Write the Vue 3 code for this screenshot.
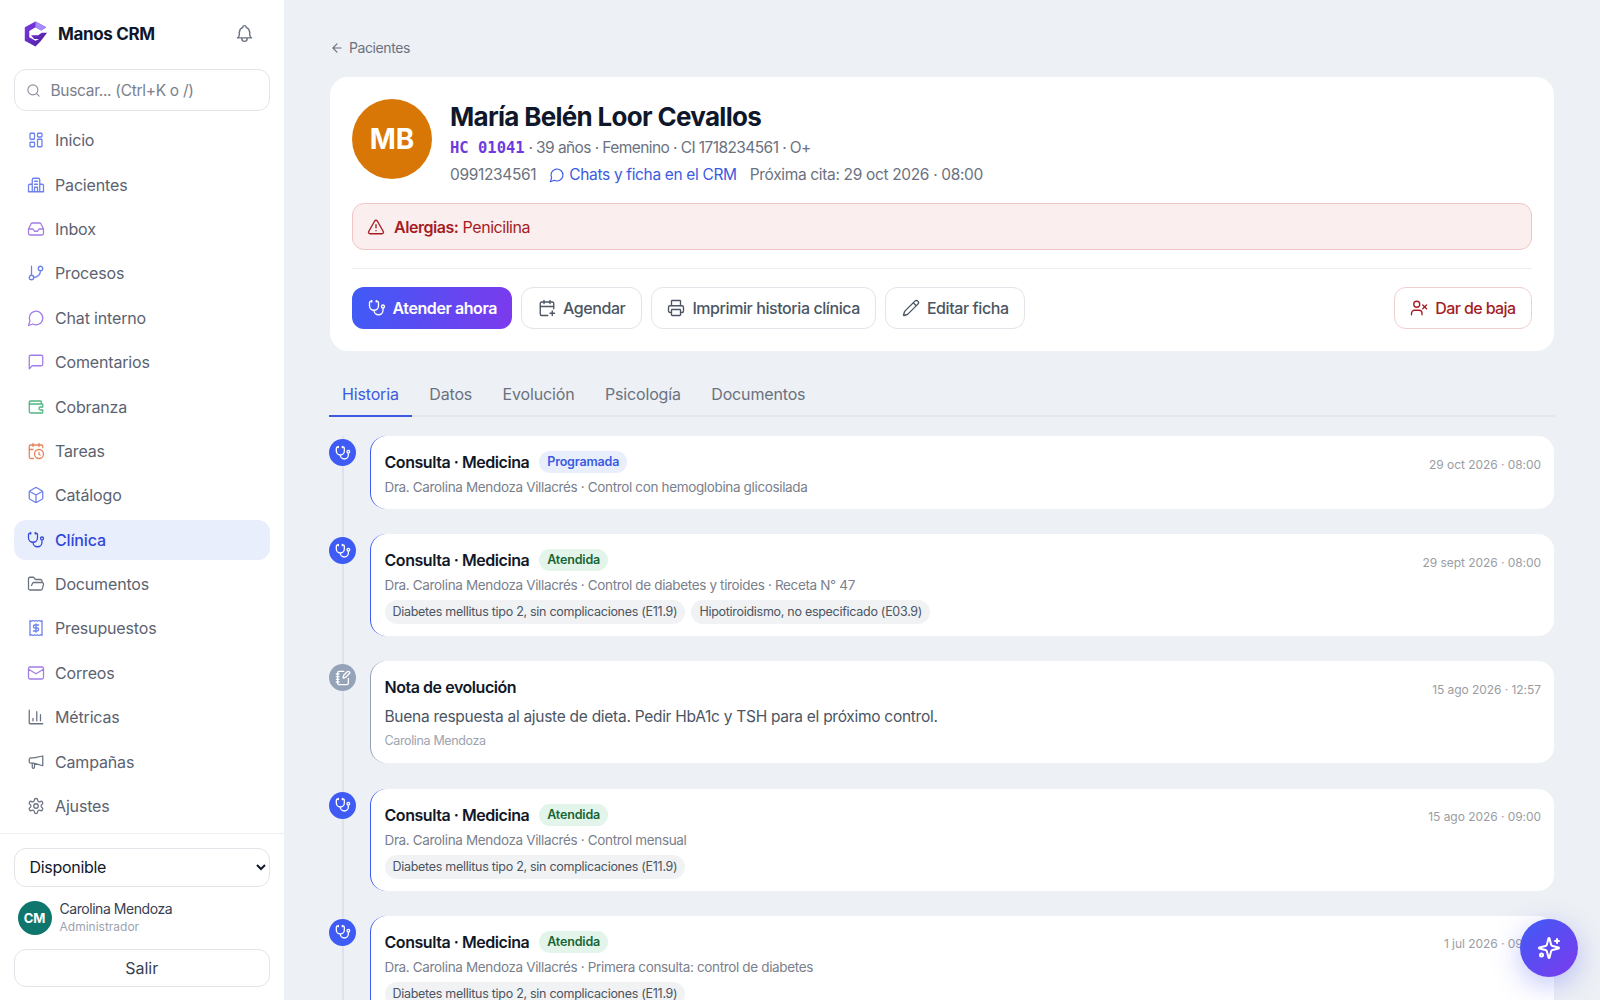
<script setup>
const icons = {
  search: "M3 11a8 8 0 1 0 16 0a8 8 0 1 0-16 0M21 21l-4.3-4.3",
  bell: "M10 5a2 2 0 1 1 4 0a7 7 0 0 1 4 6v3a4 4 0 0 0 2 3h-16a4 4 0 0 0 2-3v-3a7 7 0 0 1 4-6M9 17v1a3 3 0 0 0 6 0v-1",
  home: "M5 3h4a1 1 0 0 1 1 1v6a1 1 0 0 1-1 1h-4a1 1 0 0 1-1-1v-6a1 1 0 0 1 1-1M5 15h4a1 1 0 0 1 1 1v4a1 1 0 0 1-1 1h-4a1 1 0 0 1-1-1v-4a1 1 0 0 1 1-1M15 11h4a1 1 0 0 1 1 1v8a1 1 0 0 1-1 1h-4a1 1 0 0 1-1-1v-8a1 1 0 0 1 1-1M15 3h4a1 1 0 0 1 1 1v3a1 1 0 0 1-1 1h-4a1 1 0 0 1-1-1v-3a1 1 0 0 1 1-1",
  building: "M7 21v-10h-3a2 2 0 0 0-2 2v8M7 21V5a2 2 0 0 1 2-2h6a2 2 0 0 1 2 2v16M17 11h3a2 2 0 0 1 2 2v8M2 21h20M10 7h4M10 11h4M10 21v-6h4v6",
  inbox: "M22 12h-6l-2 3h-4l-2-3H2M5.45 5.11 2 12v6a2 2 0 0 0 2 2h16a2 2 0 0 0 2-2v-6l-3.45-6.89A2 2 0 0 0 16.76 4H7.24a2 2 0 0 0-1.79 1.11z",
  branch: "M6 3v12M3 18a3 3 0 1 0 6 0a3 3 0 1 0-6 0M15 6a3 3 0 1 0 6 0a3 3 0 1 0-6 0M18 9a9 9 0 0 1-9 9",
  chat: "M7.9 20A9 9 0 1 0 4 16.1L2 22Z",
  comment: "M21 15a2 2 0 0 1-2 2H7l-4 4V5a2 2 0 0 1 2-2h14a2 2 0 0 1 2 2z",
  wallet: "M19 7V5a1 1 0 0 0-1-1H5a2 2 0 0 0 0 4h15a1 1 0 0 1 1 1v3h-3a2 2 0 0 0 0 4h3v3a1 1 0 0 1-1 1H5a2 2 0 0 1-2-2V6",
  tasks: "M21 7.5V6a2 2 0 0 0-2-2H5a2 2 0 0 0-2 2v14a2 2 0 0 0 2 2h3.5M16 2v4M8 2v4M3 10h5M17.5 17.5 16 16.3V14M10 16a6 6 0 1 0 12 0a6 6 0 1 0-12 0",
  box: "M21 8a2 2 0 0 0-1-1.73l-7-4a2 2 0 0 0-2 0l-7 4A2 2 0 0 0 3 8v8a2 2 0 0 0 1 1.73l7 4a2 2 0 0 0 2 0l7-4A2 2 0 0 0 21 16ZM3.3 7 12 12l8.7-5M12 22V12",
  steth: "M11 2v2M5 2v2M5 3H4a2 2 0 0 0-2 2v4a6 6 0 0 0 12 0V5a2 2 0 0 0-2-2h-1M8 15a6 6 0 0 0 12 0v-3M18 10a2 2 0 1 0 4 0a2 2 0 1 0-4 0",
  folder: "m6 14 1.5-2.9A2 2 0 0 1 9.24 10H20a2 2 0 0 1 1.94 2.5l-1.54 6a2 2 0 0 1-1.95 1.5H4a2 2 0 0 1-2-2V5a2 2 0 0 1 2-2h3.9a2 2 0 0 1 1.69.9l.81 1.2a2 2 0 0 0 1.67.9H18a2 2 0 0 1 2 2v2",
  receipt: "M4 2v20l2-1 2 1 2-1 2 1 2-1 2 1 2-1 2 1V2l-2 1-2-1-2 1-2-1-2 1-2-1-2 1ZM15.5 8h-5a2 2 0 1 0 0 4h3a2 2 0 1 1 0 4h-5M12 17.5v-11",
  mail: "M4 4h16a2 2 0 0 1 2 2v12a2 2 0 0 1-2 2H4a2 2 0 0 1-2-2V6a2 2 0 0 1 2-2zM22 7l-10 6L2 7",
  chart: "M3 3v17a1 1 0 0 0 1 1h17M18 17V9M13 17V5M8 17v-3",
  megaphone: "M21 4v13l-12-3.5H5a2 2 0 0 1-2-2v-3a2 2 0 0 1 2-2h4zM7 13.5V19a1.5 1.5 0 0 0 3 0v-4.6",
  gear: "M12.22 2h-.44a2 2 0 0 0-2 2v.18a2 2 0 0 1-1 1.73l-.43.25a2 2 0 0 1-2 0l-.15-.08a2 2 0 0 0-2.73.73l-.22.38a2 2 0 0 0 .73 2.73l.15.1a2 2 0 0 1 1 1.72v.51a2 2 0 0 1-1 1.74l-.15.09a2 2 0 0 0-.73 2.73l.22.38a2 2 0 0 0 2.73.73l.15-.08a2 2 0 0 1 2 0l.43.25a2 2 0 0 1 1 1.73V20a2 2 0 0 0 2 2h.44a2 2 0 0 0 2-2v-.18a2 2 0 0 1 1-1.73l.43-.25a2 2 0 0 1 2 0l.15.08a2 2 0 0 0 2.73-.73l.22-.39a2 2 0 0 0-.73-2.73l-.15-.08a2 2 0 0 1-1-1.74v-.5a2 2 0 0 1 1-1.74l.15-.09a2 2 0 0 0 .73-2.73l-.22-.38a2 2 0 0 0-2.73-.73l-.15.08a2 2 0 0 1-2 0l-.43-.25a2 2 0 0 1-1-1.73V4a2 2 0 0 0-2-2zM9 12a3 3 0 1 0 6 0a3 3 0 1 0-6 0",
  back: "m12 19-7-7 7-7M19 12H5",
  alert: "m21.73 18-8-14a2 2 0 0 0-3.48 0l-8 14A2 2 0 0 0 4 21h16a2 2 0 0 0 1.73-3M12 9v4M12 17h.01",
  calendar: "M16 2v4M8 2v4M21 13V6a2 2 0 0 0-2-2H5a2 2 0 0 0-2 2v14a2 2 0 0 0 2 2h8M3 10h18M16 19h6M19 16v6",
  printer: "M6 18H4a2 2 0 0 1-2-2v-5a2 2 0 0 1 2-2h16a2 2 0 0 1 2 2v5a2 2 0 0 1-2 2h-2M6 9V3a1 1 0 0 1 1-1h10a1 1 0 0 1 1 1v6M7 14h10a1 1 0 0 1 1 1v6a1 1 0 0 1-1 1H7a1 1 0 0 1-1-1v-6a1 1 0 0 1 1-1z",
  pencil: "M21.174 6.812a1 1 0 0 0-3.986-3.987L3.842 16.174a2 2 0 0 0-.5.83l-1.321 4.352a.5.5 0 0 0 .623.622l4.353-1.32a2 2 0 0 0 .83-.497zM15 5l4 4",
  userx: "M16 21v-2a4 4 0 0 0-4-4H6a4 4 0 0 0-4 4v2M5 7a4 4 0 1 0 8 0a4 4 0 1 0-8 0M17 8l5 5M22 8l-5 5",
  note: "M13.4 2H6a2 2 0 0 0-2 2v16a2 2 0 0 0 2 2h12a2 2 0 0 0 2-2v-7.4M2 6h4M2 10h4M2 14h4M2 18h4M21.378 5.626a1 1 0 1 0-3.004-3.004l-5.01 5.012a2 2 0 0 0-.506.854l-.837 2.87a.5.5 0 0 0 .62.62l2.87-.837a2 2 0 0 0 .854-.506z",
  sparkle: "M9.937 15.5A2 2 0 0 0 8.5 14.063l-6.135-1.582a.5.5 0 0 1 0-.962L8.5 9.936A2 2 0 0 0 9.937 8.5l1.582-6.135a.5.5 0 0 1 .963 0L14.063 8.5A2 2 0 0 0 15.5 9.937l6.135 1.581a.5.5 0 0 1 0 .964L15.5 14.063a2 2 0 0 0-1.437 1.437l-1.582 6.135a.5.5 0 0 1-.963 0zM20 3v4M22 5h-4M3 19a1.5 1.5 0 1 0 3 0a1.5 1.5 0 1 0-3 0",
};

const navItems = [
  { label: "Inicio", icon: "home", tone: "blue" },
  { label: "Pacientes", icon: "building", tone: "blue" },
  { label: "Inbox", icon: "inbox", tone: "purple" },
  { label: "Procesos", icon: "branch", tone: "blue" },
  { label: "Chat interno", icon: "chat", tone: "purple" },
  { label: "Comentarios", icon: "comment", tone: "purple" },
  { label: "Cobranza", icon: "wallet", tone: "green" },
  { label: "Tareas", icon: "tasks", tone: "orange" },
  { label: "Catálogo", icon: "box", tone: "blue" },
  { label: "Clínica", icon: "steth", tone: "active", active: true },
  { label: "Documentos", icon: "folder", tone: "gray" },
  { label: "Presupuestos", icon: "receipt", tone: "blue" },
  { label: "Correos", icon: "mail", tone: "purple" },
  { label: "Métricas", icon: "chart", tone: "gray" },
  { label: "Campañas", icon: "megaphone", tone: "gray" },
  { label: "Ajustes", icon: "gear", tone: "gray" },
];

const tabs = ["Historia", "Datos", "Evolución", "Psicología", "Documentos"];

const diabetes = "Diabetes mellitus tipo 2, sin complicaciones (E11.9)";
const doctor = "Dra. Carolina Mendoza Villacrés";

const history = [
  {
    title: "Consulta · Medicina",
    status: "Programada",
    statusClass: "scheduled",
    sub: `${doctor} · Control con hemoglobina glicosilada`,
    date: "29 oct 2026 · 08:00",
    tags: [],
  },
  {
    title: "Consulta · Medicina",
    status: "Atendida",
    statusClass: "done",
    sub: `${doctor} · Control de diabetes y tiroides · Receta N° 47`,
    date: "29 sept 2026 · 08:00",
    tags: [diabetes, "Hipotiroidismo, no especificado (E03.9)"],
  },
  {
    title: "Nota de evolución",
    note: "Buena respuesta al ajuste de dieta. Pedir HbA1c y TSH para el próximo control.",
    author: "Carolina Mendoza",
    date: "15 ago 2026 · 12:57",
    isNote: true,
    tags: [],
  },
  {
    title: "Consulta · Medicina",
    status: "Atendida",
    statusClass: "done",
    sub: `${doctor} · Control mensual`,
    date: "15 ago 2026 · 09:00",
    tags: [diabetes],
  },
  {
    title: "Consulta · Medicina",
    status: "Atendida",
    statusClass: "done",
    sub: `${doctor} · Primera consulta: control de diabetes`,
    date: "1 jul 2026 · 09:00",
    tags: [diabetes],
  },
];
</script>

<template>
  <div class="layout">
    <aside class="sidebar">
      <div class="brand">
        <svg class="logo" viewBox="0 0 28 30">
          <defs>
            <linearGradient id="logoFill" x1="0" y1="0" x2="1" y2="1">
              <stop offset="0" stop-color="#7c3aed" />
              <stop offset="1" stop-color="#4c1d95" />
            </linearGradient>
          </defs>
          <path fill="url(#logoFill)" d="M14 1 26 7.5 20.5 11 14 7.5 7 11.5V18.5L14 22.5 18 20.5H12.5L9 16.5H17L21 13.5H27L19.5 23.5 14 29 2 22.5V7.5Z" />
          <path fill="#a78bfa" d="M14 1 26 7.5 20.5 11 14 7.5Z" />
        </svg>
        <strong>Manos CRM</strong>
        <svg class="bell" viewBox="0 0 24 24"><path :d="icons.bell" /></svg>
      </div>

      <label class="search">
        <svg viewBox="0 0 24 24"><path :d="icons.search" /></svg>
        <span>Buscar... (Ctrl+K o /)</span>
      </label>

      <nav class="nav">
        <a
          v-for="item in navItems"
          :key="item.label"
          class="nav-item"
          :class="{ active: item.active }"
        >
          <svg :class="item.tone" viewBox="0 0 24 24"><path :d="icons[item.icon]" /></svg>
          {{ item.label }}
        </a>
      </nav>

      <div class="side-footer">
        <select class="status-select">
          <option>Disponible</option>
        </select>
        <div class="user">
          <div class="user-avatar">CM</div>
          <div>
            <div class="user-name">Carolina Mendoza</div>
            <div class="user-role">Administrador</div>
          </div>
        </div>
        <button class="logout">Salir</button>
      </div>
    </aside>

    <main class="main">
      <a class="crumb">
        <svg viewBox="0 0 24 24"><path :d="icons.back" /></svg>
        Pacientes
      </a>

      <section class="patient">
        <div class="patient-head">
          <div class="patient-avatar">MB</div>
          <div>
            <h1>María Belén Loor Cevallos</h1>
            <p class="meta"><span class="hc">HC 01041</span> · 39 años · Femenino · CI 1718234561 · O+</p>
            <p class="meta contact">
              <span>0991234561</span>
              <a class="crm-link">
                <svg viewBox="0 0 24 24"><path :d="icons.chat" /></svg>
                Chats y ficha en el CRM
              </a>
              <span>Próxima cita: 29 oct 2026 · 08:00</span>
            </p>
          </div>
        </div>

        <div class="allergy">
          <svg viewBox="0 0 24 24"><path :d="icons.alert" /></svg>
          <span><b>Alergias:</b> Penicilina</span>
        </div>

        <div class="actions">
          <button class="btn primary"><svg viewBox="0 0 24 24"><path :d="icons.steth" /></svg>Atender ahora</button>
          <button class="btn"><svg viewBox="0 0 24 24"><path :d="icons.calendar" /></svg>Agendar</button>
          <button class="btn"><svg viewBox="0 0 24 24"><path :d="icons.printer" /></svg>Imprimir historia clínica</button>
          <button class="btn"><svg viewBox="0 0 24 24"><path :d="icons.pencil" /></svg>Editar ficha</button>
          <button class="btn danger"><svg viewBox="0 0 24 24"><path :d="icons.userx" /></svg>Dar de baja</button>
        </div>
      </section>

      <div class="tabs">
        <a v-for="(tab, i) in tabs" :key="tab" class="tab" :class="{ active: i === 0 }">{{ tab }}</a>
      </div>

      <div class="timeline">
        <article v-for="(entry, i) in history" :key="i" class="entry">
          <div class="dot" :class="{ gray: entry.isNote }">
            <svg viewBox="0 0 24 24"><path :d="entry.isNote ? icons.note : icons.steth" /></svg>
          </div>
          <div class="card" :class="{ 'note-card': entry.isNote }">
            <div class="card-top">
              <div class="card-title">
                <h3>{{ entry.title }}</h3>
                <span v-if="entry.status" class="status" :class="entry.statusClass">{{ entry.status }}</span>
              </div>
              <time>{{ entry.date }}</time>
            </div>
            <p v-if="entry.sub" class="sub">{{ entry.sub }}</p>
            <p v-if="entry.note" class="note">{{ entry.note }}</p>
            <p v-if="entry.author" class="author">{{ entry.author }}</p>
            <div v-if="entry.tags.length" class="tags">
              <span v-for="tag in entry.tags" :key="tag" class="tag">{{ tag }}</span>
            </div>
          </div>
        </article>
      </div>
    </main>

    <button class="fab">
      <svg viewBox="0 0 24 24"><path :d="icons.sparkle" /></svg>
    </button>
  </div>
</template>

<style>
html,
body {
  margin: 0;
  overflow: hidden;
}
</style>

<style scoped>
* {
  box-sizing: border-box;
}

svg {
  fill: none;
  stroke: currentColor;
  stroke-width: 2;
  stroke-linecap: round;
  stroke-linejoin: round;
  flex: none;
}

h1,
h3,
p {
  margin: 0;
}

.layout {
  display: flex;
  height: 1000px;
  overflow: hidden;
  background: #edf0f4;
  font-family: Inter, "Noto Sans", sans-serif;
  letter-spacing: -0.01em;
  color: #111827;
}

.sidebar {
  width: 284px;
  flex: none;
  background: #fff;
  display: flex;
  flex-direction: column;
}

.brand {
  display: flex;
  align-items: center;
  height: 67px;
  padding: 0 29px 0 23px;
}

.logo {
  width: 25px;
  height: 28px;
  stroke: none;
  margin-right: 10px;
}

.brand strong {
  font-size: 17px;
  font-weight: 700;
  letter-spacing: -0.35px;
  color: #0f172a;
  flex: 1;
}

.bell {
  width: 21px;
  height: 21px;
  color: #6b7280;
  stroke-width: 1.6;
}

.search {
  margin: 2px 14px 0 13.5px;
  height: 42px;
  border: 1px solid #e2e4e9;
  border-radius: 12px;
  display: flex;
  align-items: center;
  gap: 10px;
  padding: 0 11px;
  font-size: 15.5px;
  letter-spacing: -0.3px;
  color: #7a808c;
}

.search svg {
  width: 15px;
  height: 15px;
  color: #8b919c;
  stroke-width: 1.8;
}

.nav {
  padding: 9px 14px 0 13.5px;
  display: flex;
  flex-direction: column;
  gap: 4px;
  flex: 1;
}

.nav-item {
  height: 40.4px;
  display: flex;
  align-items: center;
  gap: 10.5px;
  padding: 0 13px;
  border-radius: 12px;
  font-size: 16px;
  color: #5b6270;
}

.nav-item svg {
  width: 18px;
  height: 18px;
  stroke-width: 1.7;
}

.nav-item.active {
  background: #e9eefc;
  color: #3147d8;
  font-weight: 500;
}

.blue { color: #6c80ee; }
.purple { color: #a17de8; }
.green { color: #4cb581; }
.orange { color: #e5835a; }
.gray { color: #6b7280; }
.active { color: #3147d8; }

.side-footer {
  border-top: 1px solid #eceef2;
  padding: 14px 14px 13.5px 13.5px;
}

.status-select {
  width: 100%;
  height: 39px;
  border: 1px solid #e2e4e9;
  border-radius: 12px;
  background: #fff;
  padding: 0 11px;
  font-family: inherit;
  font-size: 16px;
  letter-spacing: -0.3px;
  color: #111827;
}

.user {
  display: flex;
  align-items: center;
  gap: 8px;
  padding: 13.5px 4px 13px;
}

.user-avatar {
  width: 34px;
  height: 34px;
  border-radius: 50%;
  background: #0f766e;
  color: #fff;
  font-size: 13px;
  font-weight: 700;
  display: flex;
  align-items: center;
  justify-content: center;
}

.user-name {
  font-size: 14px;
  letter-spacing: -0.45px;
  color: #374151;
  line-height: 18px;
}

.user-role {
  font-size: 12px;
  letter-spacing: 0;
  color: #9ca3af;
  line-height: 18px;
}

.logout {
  width: 100%;
  height: 37.5px;
  border: 1px solid #e2e4e9;
  border-radius: 12px;
  background: #fff;
  font-family: inherit;
  font-size: 16px;
  color: #374151;
}

.main {
  flex: 1;
  min-width: 0;
  padding: 38px 46px 0;
  overflow: hidden;
}

.crumb {
  display: flex;
  align-items: center;
  gap: 5px;
  height: 19px;
  font-size: 14px;
  letter-spacing: -0.4px;
  color: #6b7280;
}

.crumb svg {
  width: 14px;
  height: 14px;
}

.patient {
  margin-top: 20px;
  background: #fff;
  border-radius: 18px;
  padding: 22px;
  height: 274px;
}

.patient-head {
  display: flex;
  gap: 18px;
}

.patient-avatar {
  width: 80px;
  height: 80px;
  border-radius: 50%;
  background: #d97706;
  color: #fff;
  font-size: 28px;
  font-weight: 700;
  display: flex;
  align-items: center;
  justify-content: center;
}

h1 {
  font-size: 26px;
  font-weight: 700;
  line-height: 36px;
  color: #0f172a;
  letter-spacing: -0.7px;
}

.meta {
  font-size: 15.5px;
  line-height: 26.5px;
  color: #6b7280;
  letter-spacing: -0.58px;
}

.hc {
  font-family: "DejaVu Sans Mono", monospace;
  font-size: 15.5px;
  font-weight: 700;
  color: #6d3ae0;
  letter-spacing: 0;
}

.contact {
  display: flex;
  gap: 13px;
  letter-spacing: -0.34px;
}

.crm-link {
  display: flex;
  align-items: center;
  gap: 4px;
  color: #3b5be0;
}

.crm-link svg {
  width: 16px;
  height: 16px;
  stroke-width: 1.7;
}

.allergy {
  margin-top: 15px;
  height: 47px;
  border: 1px solid #f0c6c6;
  border-radius: 12px;
  background: #fbeeee;
  color: #a51d24;
  display: flex;
  align-items: center;
  gap: 9px;
  padding: 0 14px;
  font-size: 16px;
  letter-spacing: -0.45px;
}

.allergy svg {
  width: 18px;
  height: 18px;
  stroke-width: 1.8;
}

.allergy b {
  font-weight: 600;
}

.actions {
  margin-top: 18px;
  border-top: 1px solid #eceef2;
  padding-top: 18px;
  display: flex;
  gap: 9px;
}

.btn {
  height: 42px;
  padding: 0 15.5px;
  display: flex;
  align-items: center;
  gap: 7px;
  border: 1px solid #e2e4e9;
  border-radius: 12px;
  background: #fff;
  font-family: inherit;
  font-size: 16px;
  font-weight: 500;
  letter-spacing: -0.42px;
  color: #4b5563;
}

.btn svg {
  width: 18px;
  height: 18px;
  stroke-width: 1.8;
}

.btn.primary {
  border: 0;
  background: linear-gradient(100deg, #3f5bf6, #7c3aed);
  color: #fff;
  font-weight: 600;
}

.btn.danger {
  margin-left: auto;
  border-color: #f0cfcf;
  color: #a51d24;
  letter-spacing: -0.6px;
}

.tabs {
  margin-top: 24px;
  display: flex;
  gap: 4.5px;
  border-bottom: 2px solid #e4e6eb;
  height: 42px;
  margin-right: -1px;
  margin-left: -1px;
}

.tab {
  padding: 0 13px;
  height: 42px;
  line-height: 39px;
  font-size: 16px;
  color: #6b7280;
}

.tab.active {
  color: #3b5be0;
  border-bottom: 2px solid #3b5be0;
}

.timeline {
  margin-top: 19px;
  margin-left: -1px;
  position: relative;
  display: flex;
  flex-direction: column;
  gap: 25.2px;
}

.entry {
  display: flex;
  position: relative;
}

.entry::before {
  content: "";
  position: absolute;
  left: 12.5px;
  top: 0;
  bottom: -26px;
  width: 2px;
  background: #dfe2e8;
}

.dot {
  position: relative;
  width: 27px;
  height: 27px;
  border-radius: 50%;
  background: #3f5bf6;
  color: #fff;
  display: flex;
  align-items: center;
  justify-content: center;
  flex: none;
  margin-top: 3px;
}

.dot.gray {
  background: #94a3b8;
}

.dot svg {
  width: 16px;
  height: 16px;
}

.card {
  margin-left: 14px;
  flex: 1;
  background: #fff;
  border-radius: 16px;
  border-left: 1.5px solid #3f5bf6;
  padding: 15px 13px 12px 13.5px;
}

.card.note-card {
  border-left-color: #94a3b8;
  padding-bottom: 13px;
}

.card-top {
  display: flex;
  justify-content: space-between;
  align-items: center;
  height: 22px;
}

.card-title {
  display: flex;
  align-items: center;
  gap: 10px;
  height: 22px;
}

h3 {
  font-size: 16px;
  font-weight: 600;
  line-height: 22px;
  letter-spacing: -0.45px;
  color: #111827;
}

time {
  font-size: 12px;
  letter-spacing: -0.05px;
  margin-top: 4px;
  color: #9a9da3;
}

.status {
  font-size: 12.5px;
  font-weight: 600;
  line-height: 22px;
  padding: 0 8px;
  border-radius: 11px;
}

.status.scheduled {
  background: #e9eefc;
  color: #3b5be0;
}

.status.done {
  background: #e3f5ea;
  color: #166534;
}

.sub {
  font-size: 13.5px;
  line-height: 20px;
  letter-spacing: -0.35px;
  margin-top: 4px;
  color: #7a808c;
}

.note {
  font-size: 15.5px;
  line-height: 26px;
  letter-spacing: -0.28px;
  margin-top: 6px;
  color: #4b5563;
}

.author {
  font-size: 12.5px;
  line-height: 18px;
  letter-spacing: -0.36px;
  margin-top: 2px;
  color: #9ca3af;
}

.tags {
  display: flex;
  gap: 6px;
  margin-top: 5px;
}

.tag {
  font-size: 12.5px;
  line-height: 24px;
  letter-spacing: -0.28px;
  padding: 0 8px;
  border-radius: 12px;
  background: #f1f2f4;
  color: #4b5563;
}

.fab {
  position: fixed;
  right: 22px;
  bottom: 23px;
  width: 58px;
  height: 58px;
  border: 0;
  border-radius: 50%;
  background: linear-gradient(135deg, #3f5bf6, #7c3aed);
  box-shadow: 0 8px 28px rgba(79, 91, 246, 0.35);
  color: #fff;
  display: flex;
  align-items: center;
  justify-content: center;
}

.fab svg {
  width: 24px;
  height: 24px;
}
</style>
